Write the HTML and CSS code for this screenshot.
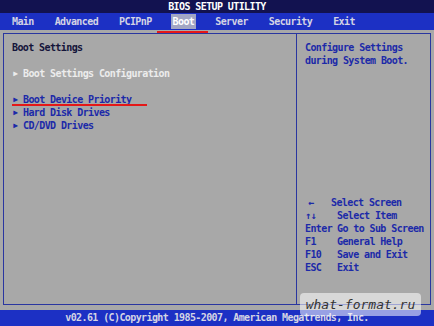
FILE: index.html
```html
<!DOCTYPE html>
<html lang="en">
<head>
  <meta charset="UTF-8">
  <meta name="viewport" content="width=device-width, initial-scale=1.0">
  <title>BIOS Setup Utility</title>
  <link rel="stylesheet" href="styles.css">
</head>
<body>
  <div class="title">BIOS SETUP UTILITY</div>

  <nav class="menu">
    <span class="tab">Main</span>
    <span class="tab">Advanced</span>
    <span class="tab">PCIPnP</span>
    <span class="tab active">Boot</span>
    <span class="tab">Server</span>
    <span class="tab">Security</span>
    <span class="tab">Exit</span>
  </nav>

  <div class="main">
    <div class="frame">
      <div class="left">
        <div class="heading">Boot Settings</div>
        <div class="item light gap"><span class="arrow">▸</span>Boot Settings Configuration</div>
        <div class="item gap"><span class="arrow">▸</span>Boot Device Priority</div>
        <div class="item"><span class="arrow">▸</span>Hard Disk Drives</div>
        <div class="item"><span class="arrow">▸</span>CD/DVD Drives</div>
      </div>
      <div class="right">
        <div class="help">Configure Settings<br>during System Boot.</div>
        <div class="legend">
          <div class="row"><span class="key arrow-key">←</span>Select Screen</div>
          <div class="row"><span class="key">↑↓</span>Select Item</div>
          <div class="row"><span class="key">Enter</span>Go to Sub Screen</div>
          <div class="row"><span class="key">F1</span>General Help</div>
          <div class="row"><span class="key">F10</span>Save and Exit</div>
          <div class="row"><span class="key">ESC</span>Exit</div>
        </div>
      </div>
    </div>
  </div>

  <footer>v02.61 (C)Copyright 1985-2007, American Megatrends, Inc.</footer>

  <!-- red marks drawn over the screenshot -->
  <div class="mark mark-tab"></div>
  <div class="mark mark-item"></div>

  <div class="watermark">what-format.ru</div>
</body>
</html>
```

FILE: styles.css
```css
* {
  padding: 0;
  margin: 0;
  box-sizing: border-box;
}

body {
  width: 434px;
  height: 326px;
  overflow: hidden;
  position: relative;
  background-color: #a8a8a8; /* BIOS gray */
  font-family: "DejaVu Sans Mono", "Liberation Mono", monospace;
  font-size: 10px;
  font-weight: bold;
  letter-spacing: -0.6px;
  line-height: 13px;
}

.title {
  height: 13px;
  background-color: #121250;
  color: #fff;
  text-align: center;
}

.menu {
  height: 17px;
  background-color: #1c30c4;
  display: flex;
  align-items: center;
  gap: 17px;
  padding-left: 10px;
}

.tab {
  color: #d4d4e4;
  padding: 1px 2px;
  line-height: 13px;
}

.tab.active {
  background-color: #a2a6c4;
  color: #fff;
}

.main {
  height: 280px;
  padding: 3px 3px 5px;
}

.frame {
  height: 272px;
  border: 1px solid #2a36a0;
  display: flex;
}

.left {
  width: 292px;
  padding: 7px 8px;
}

.heading {
  color: #14143a;
}

.item {
  color: #1c2aa8;
}

.item.light {
  color: #ececec;
}

.item.gap {
  margin-top: 13px;
}

.arrow {
  display: inline-block;
  width: 11px;
  font-size: 12px;
}

.right {
  flex: 1;
  border-left: 1px solid #2a36a0;
  padding: 7px 0 30px 8px;
  display: flex;
  flex-direction: column;
  color: #1c2aa8;
}

.legend {
  margin-top: auto;
}

.row {
  white-space: pre;
}

.key {
  display: inline-block;
  width: 32px;
}

.arrow-key {
  width: 26px;
  padding-left: 3px;
}

footer {
  height: 16px;
  background-color: #1c30c4;
  color: #d4d4e4;
  text-align: center;
  line-height: 16px;
}

.mark {
  position: absolute;
  height: 2px;
  background-color: #e41818;
}

.mark-tab {
  top: 31px;
  left: 157px;
  width: 51px;
}

.mark-item {
  top: 104px;
  left: 12px;
  width: 135px;
}

.watermark {
  position: absolute;
  top: 293px;
  left: 300px;
  width: 121px;
  height: 23px;
  border-radius: 4px;
  background-color: rgba(255, 255, 255, 0.55);
  color: #333;
  font-family: "DejaVu Sans Mono", monospace;
  font-style: italic;
  font-weight: normal;
  font-size: 13px;
  letter-spacing: 0;
  line-height: 23px;
  text-align: center;
}
```
